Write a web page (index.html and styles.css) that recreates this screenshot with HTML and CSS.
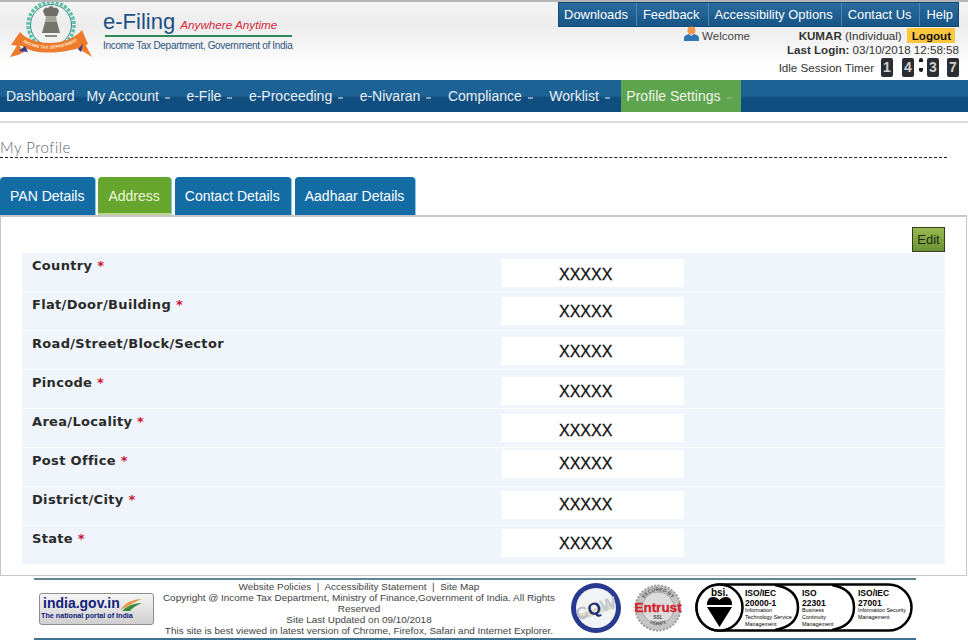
FILE: index.html
```html
<!DOCTYPE html>
<html lang="en">
<head>
    <meta charset="UTF-8">
    <title>e-Filing - My Profile</title>
    <link rel="stylesheet" href="styles.css">
</head>
<body>

<header class="header">
    <div class="brand">
        <svg class="emblem" width="86" height="60" viewBox="0 0 86 60">
            <circle cx="41" cy="23" r="23" fill="none" stroke="#5dbfa8" stroke-width="3.500" stroke-dasharray="3 1.500"/>
            <circle cx="41" cy="23" r="20.500" fill="none" stroke="#2b8f86" stroke-width="1"/>
            <path d="M33 9 Q35 4 38 6 Q41 2 44 6 Q47 4 49 9 L47 14 H35Z" fill="#6f6e66"/>
            <path d="M36 14 H46 L47 20 H35Z" fill="#a5a49b"/>
            <path d="M35 20 H47 L50 31 H32Z" fill="#75746b"/>
            <rect x="35" y="33" width="12" height="2" fill="#8a897f"/>
            <path d="M10 30 C22 44 56 46 72 28 L78 42 C60 52 24 54 12 44 L1 43 Z" fill="#ee7b2c"/>
            <path d="M0 55 L8 42 L14 50 L8 53Z" fill="#ee7b2c"/>
            <path d="M82 55 L73 38 L68 47 L74 50Z" fill="#ee7b2c"/>
            <path d="M9 49 L15 44 L18 50Z M68 47 L73 42 L71 50Z" fill="#2d3f8f"/>
            <path id="ribbon" d="M13 40 C28 50 54 49 72 36" fill="none"/>
            <text class="ribbon-text"><textPath href="#ribbon">INCOME TAX DEPARTMENT</textPath></text>
        </svg>
        <div class="brand-text">
            <div class="brand-title">e-Filing <em>Anywhere Anytime</em></div>
            <div class="brand-line"></div>
            <div class="brand-sub">Income Tax Department, Government of India</div>
        </div>
    </div>
    <div class="user-area">
        <ul class="top-links">
            <li>Downloads</li>
            <li>Feedback</li>
            <li>Accessibility Options</li>
            <li>Contact Us</li>
            <li>Help</li>
        </ul>
        <div class="welcome-row">
            <svg width="15" height="15" viewBox="0 0 15 15">
                <path d="M0 15 V11 Q1 9 5 8 L7.500 10 L10 8 Q14 9 15 11 V15Z" fill="#2f78b7"/>
                <circle cx="7.500" cy="4.500" r="4" fill="#ee9a4d"/>
            </svg>
            <span class="welcome">Welcome</span>
            <span class="user-name"><b>KUMAR</b> (Individual)</span>
            <span class="logout">Logout</span>
        </div>
        <div class="last-login"><b>Last Login:</b> 03/10/2018 12:58:58</div>
        <div class="timer-row">
            <span class="timer-label">Idle Session Timer</span>
            <span class="digit">1</span>
            <span class="digit">4</span>
            <span class="colon"></span>
            <span class="digit">3</span>
            <span class="digit">7</span>
        </div>
    </div>
</header>

<nav class="main-nav">
    <a class="nav-item">Dashboard</a>
    <a class="nav-item has-sub">My Account</a>
    <a class="nav-item has-sub">e-File</a>
    <a class="nav-item has-sub">e-Proceeding</a>
    <a class="nav-item has-sub">e-Nivaran</a>
    <a class="nav-item has-sub">Compliance</a>
    <a class="nav-item has-sub">Worklist</a>
    <a class="nav-item has-sub active">Profile Settings</a>
</nav>

<div class="rule"></div>

<h1 class="page-title">My Profile</h1>

<div class="tabs">
    <div class="tab">PAN Details</div>
    <div class="tab active">Address</div>
    <div class="tab">Contact Details</div>
    <div class="tab">Aadhaar Details</div>
</div>

<section class="panel">
    <div class="edit-row"><button class="edit-btn">Edit</button></div>
    <div class="form-row"><div class="label">Country <i>*</i></div><div class="value top-6 text-1">XXXXX</div></div>
    <div class="form-row"><div class="label">Flat/Door/Building <i>*</i></div><div class="value top-5">XXXXX</div></div>
    <div class="form-row"><div class="label">Road/Street/Block/Sector</div><div class="value top-6">XXXXX</div></div>
    <div class="form-row"><div class="label">Pincode <i>*</i></div><div class="value top-7">XXXXX</div></div>
    <div class="form-row"><div class="label">Area/Locality <i>*</i></div><div class="value top-5 text-2">XXXXX</div></div>
    <div class="form-row"><div class="label">Post Office <i>*</i></div><div class="value top-2 text-up">XXXXX</div></div>
    <div class="form-row"><div class="label">District/City <i>*</i></div><div class="value top-4 text-up">XXXXX</div></div>
    <div class="form-row"><div class="label">State <i>*</i></div><div class="value top-3">XXXXX</div></div>
</section>

<footer class="footer">
    <div class="india-badge">
        <div class="india-name">india.gov.in<svg width="22" height="14" viewBox="0 0 22 14"><path d="M0 13 Q8 2 22 2 Q14 5 10 8Z" fill="#e8963a"/><path d="M2 14 Q10 6 22 6 Q14 9 10 14Z" fill="#3d8b3d"/></svg></div>
        <div class="india-sub">The national portal of India</div>
    </div>
    <div class="footer-text">
        <div>Website Policies &nbsp;|&nbsp; Accessibility Statement &nbsp;|&nbsp; Site Map</div>
        <div>Copyright @ Income Tax Department, Ministry of Finance,Government of India. All Rights Reserved</div>
        <div>Site Last Updated on 09/10/2018</div>
        <div>This site is best viewed in latest version of Chrome, Firefox, Safari and Internet Explorer.</div>
    </div>
    <svg class="cqw" width="50" height="50" viewBox="0 0 50 50">
        <circle cx="25" cy="25" r="25" fill="#28398f"/>
        <circle cx="25" cy="25" r="20" fill="#f2f3f5"/>
        <path d="M8 31 L42 19 L43 25 L11 37Z" fill="#dcdccb"/>
        <text x="25" y="31" class="cqw-text" transform="rotate(-18 25 25)"><tspan fill="#b9bcc4">C</tspan><tspan fill="#1d2c6b">Q</tspan><tspan fill="#c4c7ce">W</tspan></text>
    </svg>
    <svg class="entrust" width="48" height="48" viewBox="0 0 48 48">
        <circle cx="24" cy="24" r="22.500" fill="#c4c4c4" stroke="#9a9a9a" stroke-width="2" stroke-dasharray="2 1.500"/>
        <circle cx="24" cy="24" r="16" fill="#dcdcdc" stroke="#a8a8a8"/>
        <path id="seal-top" d="M7 24 A17 17 0 0 1 41 24" fill="none"/>
        <path id="seal-bottom" d="M8 30 A17 17 0 0 0 40 30" fill="none"/>
        <text class="entrust-small"><textPath href="#seal-top" startOffset="50%">SECURED BY</textPath></text>
        <text class="entrust-small"><textPath href="#seal-bottom" startOffset="50%">VERIFY</textPath></text>
        <text x="24" y="28" class="entrust-text">Entrust</text>
        <text x="24" y="35" class="entrust-small">SSL</text>
    </svg>
    <svg class="bsi" width="218" height="49" viewBox="0 0 218 49">
        <rect x="1.500" y="1.500" width="215" height="46" rx="23" fill="#fff" stroke="#000" stroke-width="2.500"/>
        <path d="M80 2 Q103 6 103 24.500 Q103 43 80 47 M137 2 Q159 6 159 24.500 Q159 43 137 47" fill="none" stroke="#000" stroke-width="2.500"/>
        <circle cx="24.500" cy="24.500" r="23" fill="#fff" stroke="#000" stroke-width="2.500"/>
        <text x="24.500" y="13" class="bsi-logo">bsi.</text>
        <path d="M12 22 Q12 14 18 14 Q22 14 24.500 17 Q27 14 31 14 Q37 14 37 22Z" fill="#000"/>
        <path d="M12 24 H37 L24.500 44Z" fill="#000"/>
        <text class="iso-title"><tspan x="50" y="13">ISO/IEC</tspan><tspan x="50" y="22.500">20000-1</tspan></text>
        <text class="iso-small"><tspan x="50" y="29">Information</tspan><tspan x="50" y="36">Technology Service</tspan><tspan x="50" y="43">Management</tspan></text>
        <text class="iso-title"><tspan x="107" y="13">ISO</tspan><tspan x="107" y="22.500">22301</tspan></text>
        <text class="iso-small"><tspan x="107" y="29">Business</tspan><tspan x="107" y="36">Continuity</tspan><tspan x="107" y="43">Management</tspan></text>
        <text class="iso-title"><tspan x="163" y="13">ISO/IEC</tspan><tspan x="163" y="22.500">27001</tspan></text>
        <text class="iso-small"><tspan x="163" y="29">Information Security</tspan><tspan x="163" y="36">Management</tspan></text>
    </svg>
</footer>

</body>
</html>
```

FILE: styles.css
```css
* { box-sizing: border-box; }
body { margin: 0; height: 641px; overflow: hidden; background-color: #ffffff; font-family: "Liberation Sans", Arial, sans-serif; color: #333333; }

.header { height: 80px; display: flex; justify-content: space-between; border-top: 2px solid #b5b5b5; background: linear-gradient(to bottom, #f4f4f4 0%, #ececec 30%, #ffffff 85%); }
.brand { display: flex; align-items: flex-start; padding-left: 10px; }
.ribbon-text { font-size: 4.300px; font-weight: bold; fill: #ffe9d2; }
.brand-text { margin-left: 7px; padding-top: 8px; }
.brand-title { height: 24px; font-size: 22px; line-height: 24px; color: #1d4f86; white-space: nowrap; }
.brand-title em { margin-left: -1px; font-size: 11.700px; color: #d8293f; }
.brand-line { width: 187px; height: 2px; margin: 1px 0 0 2px; background-color: #2e8b57; }
.brand-sub { margin-top: 3px; font-size: 10px; color: #2d5380; white-space: nowrap; letter-spacing: -0.300px; }

.user-area { width: 410px; display: flex; flex-direction: column; align-items: flex-end; padding-right: 9px; font-size: 11.600px; color: #333333; }
.user-area > * { flex-shrink: 0; }
.top-links { display: flex; list-style: none; margin: 0; padding: 0; height: 25px; background: linear-gradient(to bottom, #2b6c9f, #165586); border: 1px solid #134a78; }
.top-links li { padding: 0 8px 0 6px; font-size: 12.900px; line-height: 23px; color: #ffffff; border-left: 1px solid #4d86b0; white-space: nowrap; }
.top-links li:first-child { border-left: 0; padding-left: 5px; }
.top-links li:last-child { padding-right: 5px; }
.welcome-row { width: 100%; display: flex; align-items: center; height: 14px; margin-top: 1px; padding-left: 126px; }
.welcome-row svg { margin-top: -3px; }
.welcome { margin-left: 3px; width: 97px; color: #444444; }
.user-name { white-space: nowrap; }
.logout { margin: 0 4px 0 5px; padding: 0 4px 0 5px; background-color: #fcc640; color: #111111; font-weight: bold; line-height: 15px; }
.last-login { line-height: 16px; white-space: nowrap; }
.timer-row { display: flex; align-items: center; height: 19px; }
.timer-label { margin-right: 7px; }
.digit { width: 12px; height: 19px; margin-left: 8px; background-color: #2a2e33; color: #cfcfcf; font-size: 14px; font-weight: bold; line-height: 19px; text-align: center; border-radius: 2px; }
.digit:nth-child(2) { margin-left: 0; }
.digit:nth-child(3) { margin-left: 9px; }
.colon { width: 4px; height: 14px; margin: -5px -4px 0 5px; border-top: 4px solid #1c1c1c; border-bottom: 4px solid #1c1c1c; border-radius: 2px; }

.main-nav { height: 32px; display: flex; background: linear-gradient(to bottom, #1d6295 0%, #1d6295 50%, #114e80 55%, #114e80 100%); }
.nav-item { padding: 0 6px; font-size: 14px; line-height: 33px; color: #e8eef4; white-space: nowrap; }
.nav-item.has-sub { padding-right: 10.500px; }
.nav-item.has-sub::after { content: ""; display: inline-block; width: 5px; height: 2px; margin-left: 6px; vertical-align: 2px; background-color: #7f9fbb; }
.nav-item.active { margin-left: 1px; padding-left: 5px; padding-right: 9.500px; background-color: #5ea34e; color: #eef5ea; }
.nav-item.active::after { background-color: #7fb06f; }

.rule { height: 2px; margin-top: 9px; background-color: #dcdcdc; }
.page-title { width: 947px; height: 21px; margin: 14px 0 0; font-family: Lato, sans-serif; font-size: 15px; font-weight: 300; line-height: 20px; letter-spacing: 0.500px; color: #5d6470; border-bottom: 1px dashed #222222; }

.tabs { display: flex; gap: 3px; margin-top: 19px; }
.tab { height: 38px; padding: 0 10px; font-size: 14px; line-height: 38px; color: #ffffff; background-color: #146ca4; border-radius: 4px 4px 0 0; border-right: 1px solid #8ec6e6; white-space: nowrap; }
.tab:first-child { padding-right: 11px; margin-right: -1px; }
.tab.active { background-color: #67a62c; color: #eef6df; border-bottom: 2px solid #b9d58e; padding-right: 11px; }
.tab:nth-child(3), .tab:nth-child(4) { padding-right: 11px; }

.panel { width: 967px; height: 361px; padding: 10px 21px 0 21px; border: 2px solid #c6c6c6; border-width: 2px 1px 1px 1px; background-color: #ffffff; }
.edit-row { display: flex; justify-content: flex-end; height: 26px; }
.edit-btn { width: 33px; height: 25px; padding: 0; font-family: inherit; font-size: 13px; color: #1d2a10; background: linear-gradient(to bottom, #98b94f, #6c9236); border: 1px solid #2f3f1c; }
.form-row { height: 39px; display: flex; padding-left: 10px; background-color: #eff5fa; border-bottom: 1px solid #fafcfd; }
.label { width: 470px; padding-top: 6px; font-family: "DejaVu Sans", Verdana, sans-serif; font-size: 13px; font-weight: bold; line-height: 13px; letter-spacing: 0.320px; color: #2a2a2a; }
.label i { font-style: normal; color: #cc1133; }
.value { width: 182px; height: 28px; padding-left: 57px; background-color: #ffffff; font-size: 16px; line-height: 29px; color: #111111; -webkit-text-stroke: 0.300px #111111; }
.top-2 { margin-top: 2px; }
.top-3 { margin-top: 3px; }
.top-4 { margin-top: 4px; }
.top-5 { margin-top: 5px; }
.top-6 { margin-top: 6px; }
.top-7 { margin-top: 7px; }
.text-1 { line-height: 31px; }
.text-2 { line-height: 33px; }
.text-up { line-height: 27px; }

.footer { width: 882px; height: 62px; margin: 2px 0 0 34px; display: flex; align-items: flex-start; border-top: 2px solid #5f8595; border-bottom: 2px solid #3d7390; }
.india-badge { width: 115px; height: 32px; margin: 13px 0 0 5px; padding: 2px 1px; background: linear-gradient(to bottom, #f5f5f5, #cfcfcf); border: 1px solid #8d8d8d; border-radius: 3px; flex-shrink: 0; }
.india-name { padding-left: 2px; font-size: 14px; font-weight: bold; line-height: 15px; color: #11217a; white-space: nowrap; display: flex; align-items: center; }
.india-sub { font-size: 7.200px; font-weight: bold; line-height: 9px; color: #11217a; white-space: nowrap; }
.footer-text { width: 400px; margin-left: 5px; padding-top: 1px; font-size: 9.950px; line-height: 11px; color: #444444; text-align: center; flex-shrink: 0; }
.cqw { margin: 3px 0 0 12px; flex-shrink: 0; }
.cqw-text { font-size: 17px; font-weight: bold; text-anchor: middle; }
.entrust { margin: 4px 0 0 13px; flex-shrink: 0; }
.entrust-text { font-size: 13.500px; font-weight: bold; fill: #d6202b; text-anchor: middle; stroke: #d6202b; stroke-width: 0.300px; }
.entrust-small { font-size: 5px; font-weight: bold; fill: #555555; text-anchor: middle; }
.bsi { margin: 3px 0 0 13px; flex-shrink: 0; }
.bsi-logo { font-size: 10px; font-weight: bold; text-anchor: middle; }
.iso-title { font-size: 8.500px; font-weight: bold; }
.iso-small { font-size: 5.400px; }
```
